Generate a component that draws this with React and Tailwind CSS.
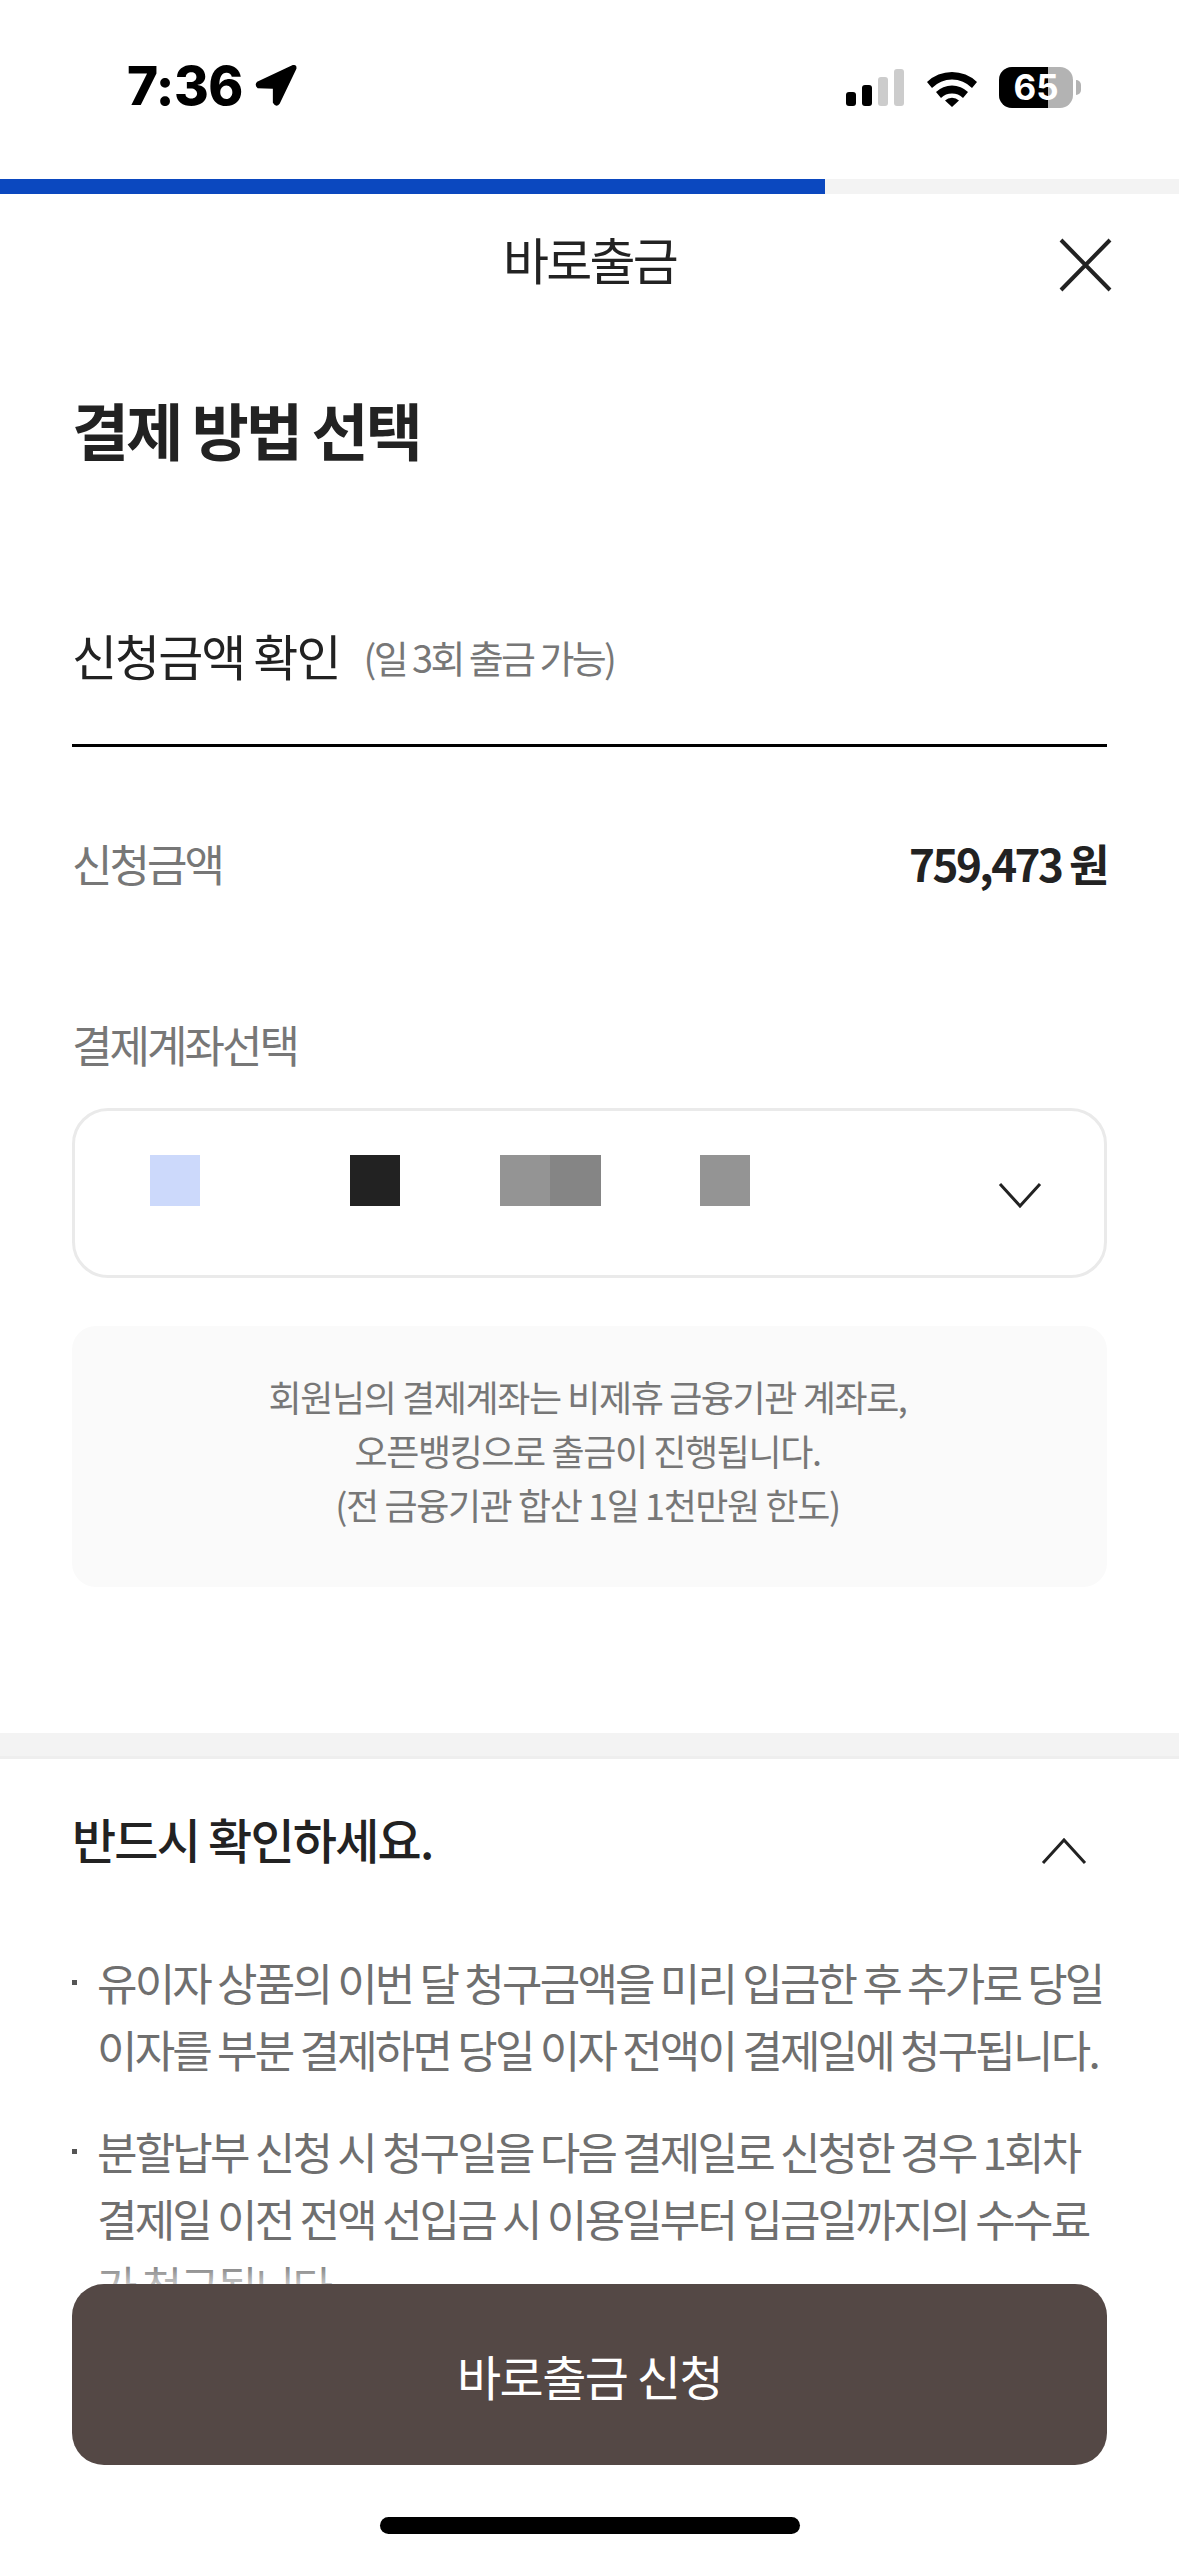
import React from "react";

const kr = "font-['Noto_Sans_CJK_KR','Noto_Sans',sans-serif]";

function StatusBar() {
  return (
    <div className="relative h-[179px] shrink-0 bg-white">
      <div className="absolute left-[127px] top-[56px] flex items-center">
        <span className="font-['Inter',sans-serif] text-[53px] leading-[60px] font-extrabold tracking-[-0.5px] text-black">7:36</span>
        <svg className="ml-[11px] mt-[-2px]" width="44" height="44" viewBox="0 0 42 42">
          <path d="M37 2 L3 18 Q0 21 3.5 24 L18 24.5 L18 38 Q21 43 24.5 39 L40.5 5.5 Q41 1 37 2 Z" fill="#000" />
        </svg>
      </div>
      <div className="absolute left-[846px] top-[67px] flex items-start">
        <svg width="58" height="40" viewBox="0 0 58 40">
          <rect x="0" y="25" width="10" height="14" rx="3" fill="#000" />
          <rect x="16" y="18" width="10" height="21" rx="3" fill="#000" />
          <rect x="32" y="10" width="10" height="29" rx="3" fill="#ccc" />
          <rect x="48" y="2" width="10" height="37" rx="3" fill="#ccc" />
        </svg>
        <svg className="ml-[22px]" width="52" height="40" viewBox="0 0 52 40">
          <path d="M1 15 A36 36 0 0 1 51 15 L46 21 A28 28 0 0 0 6 21 Z" fill="#000" />
          <path d="M10 25 A23 23 0 0 1 42 25 L37 31 A16 16 0 0 0 15 31 Z" fill="#000" />
          <path d="M19 33.5 A10 10 0 0 1 33 33.5 L26 40 Z" fill="#000" />
        </svg>
        <div className="relative ml-[21px] h-[41px] w-[74px] overflow-hidden rounded-[13px] bg-[#b3b3b3]">
          <div className="h-full w-[49px] bg-black" />
          <span className="absolute inset-0 flex items-center justify-center font-['Inter',sans-serif] text-[35px] leading-none font-bold text-white">65</span>
        </div>
        <div className="ml-[3px] mt-[13px] h-[15px] w-[5px] rounded-r-full bg-[#b3b3b3]" />
      </div>
    </div>
  );
}

function App() {
  return (
    <div className={`relative h-[2556px] w-[1179px] overflow-hidden bg-white ${kr}`}>
      <StatusBar />
      <div className="h-[15px] bg-[#f3f3f3]">
        <div className="h-full w-[825px] bg-[#0b48bf]" />
      </div>

      <div className="relative flex h-[134px] items-center justify-center">
        <span className="mb-[7px] text-[50px] leading-[60px] tracking-[-2.8px] text-[#222]">바로출금</span>
        <svg className="absolute left-[1058px] top-[44px]" width="54" height="54" viewBox="0 0 54 54">
          <path d="M3 2 L52 52 M52 2 L3 52" stroke="#222" strokeWidth="4" fill="none" />
        </svg>
      </div>

      <div className="px-[72px]">
        <h1 className="mt-[61px] text-[62px] leading-[80px] font-bold tracking-[-2.8px] text-[#222]">결제 방법 선택</h1>

        <div className="mt-[154px] flex h-[124px] items-start border-b-[3px] border-black">
          <div className="flex items-center">
            <span className="text-[49px] leading-[64px] tracking-[-2px] text-[#222]">신청금액 확인</span>
            <span className="ml-[24px] mt-[4px] text-[38px] leading-[50px] tracking-[-2.6px] text-[#777]">(일 3회 출금 가능)</span>
          </div>
        </div>

        <div className="mt-[86px] flex items-center justify-between">
          <span className="text-[44px] leading-[60px] tracking-[-3px] text-[#777]">신청금액</span>
          <span className="text-[44px] leading-[60px] font-bold tracking-[-2.5px] text-[#222]">759,473 원</span>
        </div>

        <div className="mt-[121px] text-[44px] leading-[60px] tracking-[-3px] text-[#777]">결제계좌선택</div>

        <div className="relative mt-[34px] h-[170px] rounded-[36px] border-[3px] border-[#eaeaea] bg-white">
          <div className="absolute left-[75px] top-[44px] h-[51px] w-[50px] bg-[#ccd9fb]" />
          <div className="absolute left-[275px] top-[44px] h-[51px] w-[50px] bg-[#222]" />
          <div className="absolute left-[425px] top-[44px] h-[51px] w-[50px] bg-[#949494]" />
          <div className="absolute left-[475px] top-[44px] h-[51px] w-[51px] bg-[#858585]" />
          <div className="absolute left-[625px] top-[44px] h-[51px] w-[50px] bg-[#949494]" />
          <svg className="absolute left-[923px] top-[70px]" width="44" height="28" viewBox="0 0 44 28">
            <path d="M2 3 L22 25 L42 3" stroke="#222" strokeWidth="3" fill="none" />
          </svg>
        </div>

        <div className="mt-[48px] flex h-[261px] flex-col items-center justify-center rounded-[24px] bg-[#fafafa] pb-[13px] pr-[4px] text-[36px] leading-[54px] tracking-[-1.4px] text-[#777]">
          <p>회원님의 결제계좌는 비제휴 금융기관 계좌로,</p>
          <p>오픈뱅킹으로 출금이 진행됩니다.</p>
          <p>(전 금융기관 합산 1일 1천만원 한도)</p>
        </div>
      </div>

      <div className="mt-[146px] h-[26px] border-b-[3px] border-[#eeeeee] bg-[#f3f3f3]" />

      <div className="px-[72px]">
        <div className="mt-[42px] flex items-center justify-between">
          <h2 className="text-[48px] leading-[74px] font-medium tracking-[-1.8px] text-[#222]">반드시 확인하세요.</h2>
          <svg className="mr-[20px] mt-[26px]" width="46" height="28" viewBox="0 0 46 28">
            <path d="M2 26 L23 3 L44 26" stroke="#222" strokeWidth="3" fill="none" />
          </svg>
        </div>
        <ul className="mt-[74px] whitespace-nowrap text-[44px] leading-[67px] tracking-[-2.8px] text-[#6f6f6f]">
          <li className="relative pl-[25px] before:absolute before:left-0 before:top-[31px] before:h-[5px] before:w-[5px] before:bg-[#555] before:content-['']">
            유이자 상품의 이번 달 청구금액을 미리 입금한 후 추가로 당일<br />이자를 부분 결제하면 당일 이자 전액이 결제일에 청구됩니다.
          </li>
          <li className="relative mt-[35px] pl-[25px] before:absolute before:left-0 before:top-[31px] before:h-[5px] before:w-[5px] before:bg-[#555] before:content-['']">
            분할납부 신청 시 청구일을 다음 결제일로 신청한 경우 1회차<br />결제일 이전 전액 선입금 시 이용일부터 입금일까지의 수수료<br />가 청구됩니다.
          </li>
        </ul>
      </div>

      <div className="absolute bottom-0 left-0 right-0">
        <div className="h-[24px] bg-gradient-to-b from-transparent to-white/60" />
        <div className="px-[72px]">
          <button className="flex h-[181px] w-full items-center justify-center rounded-[32px] bg-[#544845] text-[48px] leading-[64px] tracking-[-1.5px] text-white">바로출금 신청</button>
        </div>
        <div className="h-[91px] bg-white" />
        <div className="absolute bottom-[22px] left-[380px] h-[17px] w-[420px] rounded-full bg-black" />
      </div>
    </div>
  );
}

export default App;
